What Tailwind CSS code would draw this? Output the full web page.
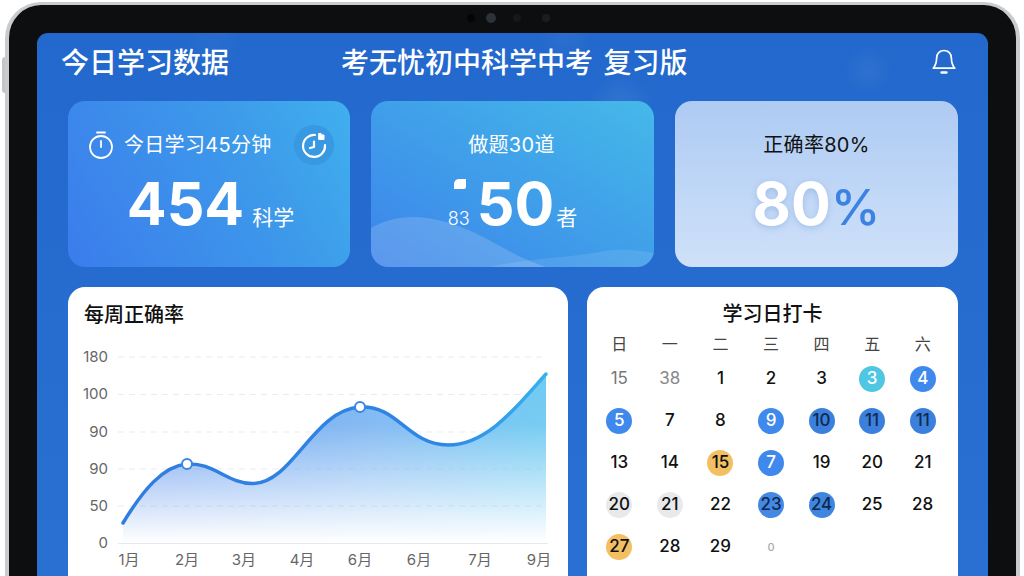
<!DOCTYPE html>
<html lang="zh-CN">
<head>
  <meta charset="UTF-8" />
  <title>今日学习数据</title>
  <script src="https://cdn.jsdelivr.net/npm/@tailwindcss/browser@4"></script>
</head>
<body class="bg-white w-[1024px] h-[576px] overflow-hidden font-['Inter','Noto_Sans_CJK_SC',sans-serif]">

  <!-- side button -->
  <div class="absolute left-[2px] top-[57px] w-[3px] h-[36px] bg-[#c4c6c9] rounded-l-sm"></div>

  <!-- device -->
  <div class="relative ml-[5px] mt-[2px] w-[1015px] h-[574px] rounded-t-[36px] border-t-[3px] border-x-[4px] border-[#c9cbcd] bg-[#0d0e10] px-[28px] pt-[28px]">
    <!-- cameras -->
    <div class="absolute left-[458px] top-[8px] flex items-center">
      <div class="w-[8px] h-[8px] rounded-full bg-[#050506]"></div>
      <div class="w-[10px] h-[10px] rounded-full bg-[#2c3338] ml-[11px]"></div>
      <div class="w-[8px] h-[8px] rounded-full bg-[#15171a] ml-[17px]"></div>
      <div class="w-[8px] h-[8px] rounded-full bg-[#1a1c20] ml-[21px]"></div>
    </div>

    <!-- screen -->
    <div class="relative w-[951px] h-[543px] rounded-t-[11px] overflow-hidden bg-gradient-to-b from-[#2369cd] to-[#2a6fd2] pl-[31px] pr-[30px]">
      <div class="absolute left-[160px] top-[2px] w-[34px] h-[20px] rounded-full bg-white/5 blur-md"></div>
      <div class="absolute left-[562px] top-[50px] w-[44px] h-[44px] rounded-full bg-white/5 blur-sm"></div>
      <div class="absolute left-[816px] top-[22px] w-[30px] h-[30px] rounded-full bg-white/5 blur-sm"></div>
      <div class="absolute left-[510px] top-[0px] w-[36px] h-[14px] rounded-full bg-white/5 blur-sm"></div>

      <!-- header -->
      <header class="relative h-[68px] flex items-center text-white text-[28px] font-medium leading-none">
        <div class="-ml-[7px] w-[280px] pb-[8px]">今日学习数据</div>
        <div class="pb-[8px] whitespace-nowrap [word-spacing:3px]">考无忧初中科学中考 复习版</div>
        <svg class="ml-auto mr-[1px] mb-[10px]" width="26" height="28" viewBox="0 0 26 28" fill="none" stroke="#fff" stroke-width="1.7" stroke-linejoin="round" stroke-linecap="round">
          <path d="M13 2.500c-4.400 0-7.400 3.300-7.400 7.700 0 5.200-1.300 7.500-3.400 10h21.600c-2.100-2.500-3.400-4.800-3.400-10 0-4.400-3-7.700-7.400-7.700z"/>
          <path d="M10.600 24.500h4.800" stroke-width="2.400"/>
        </svg>
      </header>

      <!-- stat cards -->
      <div class="relative flex gap-[21px]">
        <div class="w-[282px] h-[166px] rounded-[17px] bg-[linear-gradient(60deg,#3b7cec,#3d9aea_65%,#40b0ee)] text-white flex flex-col items-center pt-[29px] relative overflow-hidden">
          <div class="w-full flex items-center h-[30px] pl-[19px] pr-[16px]">
            <svg width="28" height="30" viewBox="0 0 28 30" fill="none" stroke="#fff" stroke-width="1.8" stroke-linecap="round">
              <circle cx="14" cy="17" r="11"/>
              <path d="M10 2.500h8"/>
              <path d="M14 11v6"/>
            </svg>
            <span class="ml-[9px] text-[20px] leading-none whitespace-nowrap tracking-[0.3px]">今日学习45分钟</span>
            <div class="ml-auto w-[40px] h-[40px] rounded-full bg-[#3898e2] flex items-center justify-center">
              <svg width="28" height="28" viewBox="0 0 28 28" fill="none" stroke="#fff" stroke-width="2.200" stroke-linecap="round" stroke-linejoin="round">
                <path d="M15 4a11 11 0 1 0 10 10"/>
                <path d="M14 10.500v5.500l-4 1"/>
                <path d="M19 2.500h2l1 1.500h2v4.500h-5z" fill="#fff" stroke-width="1"/>
              </svg>
            </div>
          </div>
          <div class="flex items-baseline mt-[9px] ml-[3px]">
            <span class="text-[59px] font-bold leading-[70px]">454</span>
            <span class="ml-[8px] text-[21px] leading-none">科学</span>
          </div>
        </div>

        <div class="w-[283px] h-[166px] rounded-[17px] bg-gradient-to-tr from-[#3d83ea] to-[#45b9e8] text-white flex flex-col items-center pt-[29px] relative overflow-hidden">
          <svg class="absolute left-0 bottom-0" width="283" height="60" viewBox="0 0 283 60" fill="none">
            <path d="M0 21C12 14 26 10 42 10C62 10 85 16 112 30C135 42 150 52 175 60H0z" fill="#fff" fill-opacity=".16"/>
            <path d="M120 60C150 52 190 52 241 43C260 42 270 44 283 46V60z" fill="#fff" fill-opacity=".1"/>
          </svg>
          <div class="relative h-[30px] flex items-center text-[20px] leading-none tracking-[0.3px] -ml-[2px]">做题30道</div>
          <div class="relative flex items-baseline mt-[9px]">
            <span class="relative w-[29px] text-[18px] font-light leading-none">
              83
              <span class="absolute left-[6px] -top-[31px] w-[12px] h-[10px] bg-white rounded-tl-[5px] rounded-br-[2px]"></span>
            </span>
            <span class="text-[59px] font-bold leading-[70px]">50</span>
            <span class="ml-[2px] text-[21px] leading-none">者</span>
          </div>
        </div>

        <div class="w-[283px] h-[166px] rounded-[17px] bg-gradient-to-b from-[#aecbf3] to-[#cfe1f9] flex flex-col items-center pt-[29px]">
          <div class="h-[30px] flex items-center text-[20px] leading-none text-[#111] tracking-[0.3px]">正确率80%</div>
          <div class="flex items-baseline mt-[9px]">
            <span class="text-[59px] font-bold leading-[70px] text-white [text-shadow:0_2px_6px_rgba(60,110,190,0.25)]">80</span>
            <span class="text-[50px] font-medium leading-none text-[#3b82e2]">%</span>
          </div>
        </div>
      </div>

      <!-- lower row -->
      <div class="relative flex gap-[19px] mt-[20px]">
        <div class="w-[500px] h-[289px] rounded-t-[17px] bg-white">
          <div class="h-[53px] pl-[16px] pt-[15px] text-[20px] leading-[26px] font-medium text-[#111]">每周正确率</div>
          <svg width="500" height="236" viewBox="0 0 500 236" font-size="15" fill="#666">
            <defs>
              <linearGradient id="h" x1="0" x2="1" y1="0" y2="0">
                <stop offset="0" stop-color="#6f9df0"/>
                <stop offset=".6" stop-color="#7fb8f2"/>
                <stop offset="1" stop-color="#6fcaf2"/>
              </linearGradient>
              <linearGradient id="v" x1="0" x2="0" y1="34" y2="203" gradientUnits="userSpaceOnUse">
                <stop offset="0" stop-color="#fff"/>
                <stop offset=".3" stop-color="#fff" stop-opacity=".95"/>
                <stop offset="1" stop-color="#fff" stop-opacity="0"/>
              </linearGradient>
              <mask id="fade" maskUnits="userSpaceOnUse" x="0" y="0" width="500" height="236">
                <rect width="500" height="236" fill="url(#v)"/>
              </mask>
              <linearGradient id="line" x1="55" x2="478" y1="0" y2="0" gradientUnits="userSpaceOnUse">
                <stop offset="0" stop-color="#2f7de0"/>
                <stop offset=".75" stop-color="#2f86e4"/>
                <stop offset="1" stop-color="#35b2ee"/>
              </linearGradient>
            </defs>
            <g stroke="#e9ebef" stroke-width="1" stroke-dasharray="6 5">
              <path d="M50 17H479"/>
              <path d="M50 54.500H479"/>
              <path d="M50 92H479"/>
              <path d="M50 129H479"/>
              <path d="M50 166H479"/>
            </g>
            <path d="M50 203.500H480" stroke="#e4e8f0"/>
            <path mask="url(#fade)" fill="url(#h)" d="M55 183C75 150 95 126 119 124C145 122 160 144 185 143.500C225 143 245 70 292 67C330 65 340 105 380 105C420 105 450 65 478 34V203H55z"/>
            <path fill="none" stroke="url(#line)" stroke-width="3.500" stroke-linecap="round" d="M55 183C75 150 95 126 119 124C145 122 160 144 185 143.500C225 143 245 70 292 67C330 65 340 105 380 105C420 105 450 65 478 34"/>
            <circle cx="119" cy="124" r="5" fill="#fff" stroke="#3a86e6" stroke-width="2"/>
            <circle cx="292" cy="67" r="5" fill="#fff" stroke="#3a86e6" stroke-width="2"/>
            <g text-anchor="end">
              <text x="40" y="22">180</text>
              <text x="40" y="59">100</text>
              <text x="40" y="97">90</text>
              <text x="40" y="134">90</text>
              <text x="40" y="171">50</text>
              <text x="40" y="208">0</text>
            </g>
            <g text-anchor="middle">
              <text x="61" y="225">1月</text>
              <text x="119" y="225">2月</text>
              <text x="176" y="225">3月</text>
              <text x="234" y="225">4月</text>
              <text x="292" y="225">6月</text>
              <text x="351" y="225">6月</text>
              <text x="412" y="225">7月</text>
              <text x="471" y="225">9月</text>
            </g>
          </svg>
        </div>

        <div class="w-[371px] h-[289px] rounded-t-[17px] bg-white pl-[7px] pr-[10px] text-[#111]">
          <div class="pt-[14px] pl-[3px] text-center text-[20px] leading-[26px] font-medium">学习日打卡</div>
          <div class="grid grid-cols-7 mt-[4px] h-[26px] items-center text-center text-[16px] text-[#444]">
            <span>日</span><span>一</span><span>二</span><span>三</span><span>四</span><span>五</span><span>六</span>
          </div>
          <div class="grid grid-cols-7 auto-rows-[42px] mt-[1px] items-center justify-items-center text-[17px] font-medium">
            <span class="text-[#777] font-normal">15</span>
            <span class="text-[#888] font-normal">38</span>
            <span>1</span>
            <span>2</span>
            <span>3</span>
            <span class="w-[26px] h-[26px] rounded-full bg-[#4fc7e3] text-white flex items-center justify-center">3</span>
            <span class="w-[26px] h-[26px] rounded-full bg-[#3f89ec] text-white flex items-center justify-center">4</span>

            <span class="w-[26px] h-[26px] rounded-full bg-[#3f89ec] text-white flex items-center justify-center">5</span>
            <span>7</span>
            <span>8</span>
            <span class="w-[26px] h-[26px] rounded-full bg-[#3f89ec] text-white flex items-center justify-center">9</span>
            <span class="w-[26px] h-[26px] rounded-full bg-[#3a80dc] text-[#10294f] flex items-center justify-center">10</span>
            <span class="w-[26px] h-[26px] rounded-full bg-[#3a80dc] text-[#10294f] flex items-center justify-center">11</span>
            <span class="w-[26px] h-[26px] rounded-full bg-[#3a80dc] text-[#10294f] flex items-center justify-center">11</span>

            <span>13</span>
            <span>14</span>
            <span class="w-[26px] h-[26px] rounded-full bg-[#f2c063] flex items-center justify-center">15</span>
            <span class="w-[26px] h-[26px] rounded-full bg-[#3f89ec] text-white flex items-center justify-center">7</span>
            <span>19</span>
            <span>20</span>
            <span>21</span>

            <span class="w-[26px] h-[26px] rounded-full bg-[#e8e9eb] flex items-center justify-center">20</span>
            <span class="w-[26px] h-[26px] rounded-full bg-[#e8e9eb] flex items-center justify-center">21</span>
            <span>22</span>
            <span class="w-[26px] h-[26px] rounded-full bg-[#4588e4] text-[#10294f] flex items-center justify-center">23</span>
            <span class="w-[26px] h-[26px] rounded-full bg-[#3f86e0] text-[#10294f] flex items-center justify-center">24</span>
            <span>25</span>
            <span>28</span>

            <span class="w-[26px] h-[26px] rounded-full bg-[#f2c063] flex items-center justify-center">27</span>
            <span>28</span>
            <span>29</span>
            <span class="text-[11px] text-[#aaa]">0</span>
          </div>
        </div>
      </div>
    </div>
  </div>

</body>
</html>
